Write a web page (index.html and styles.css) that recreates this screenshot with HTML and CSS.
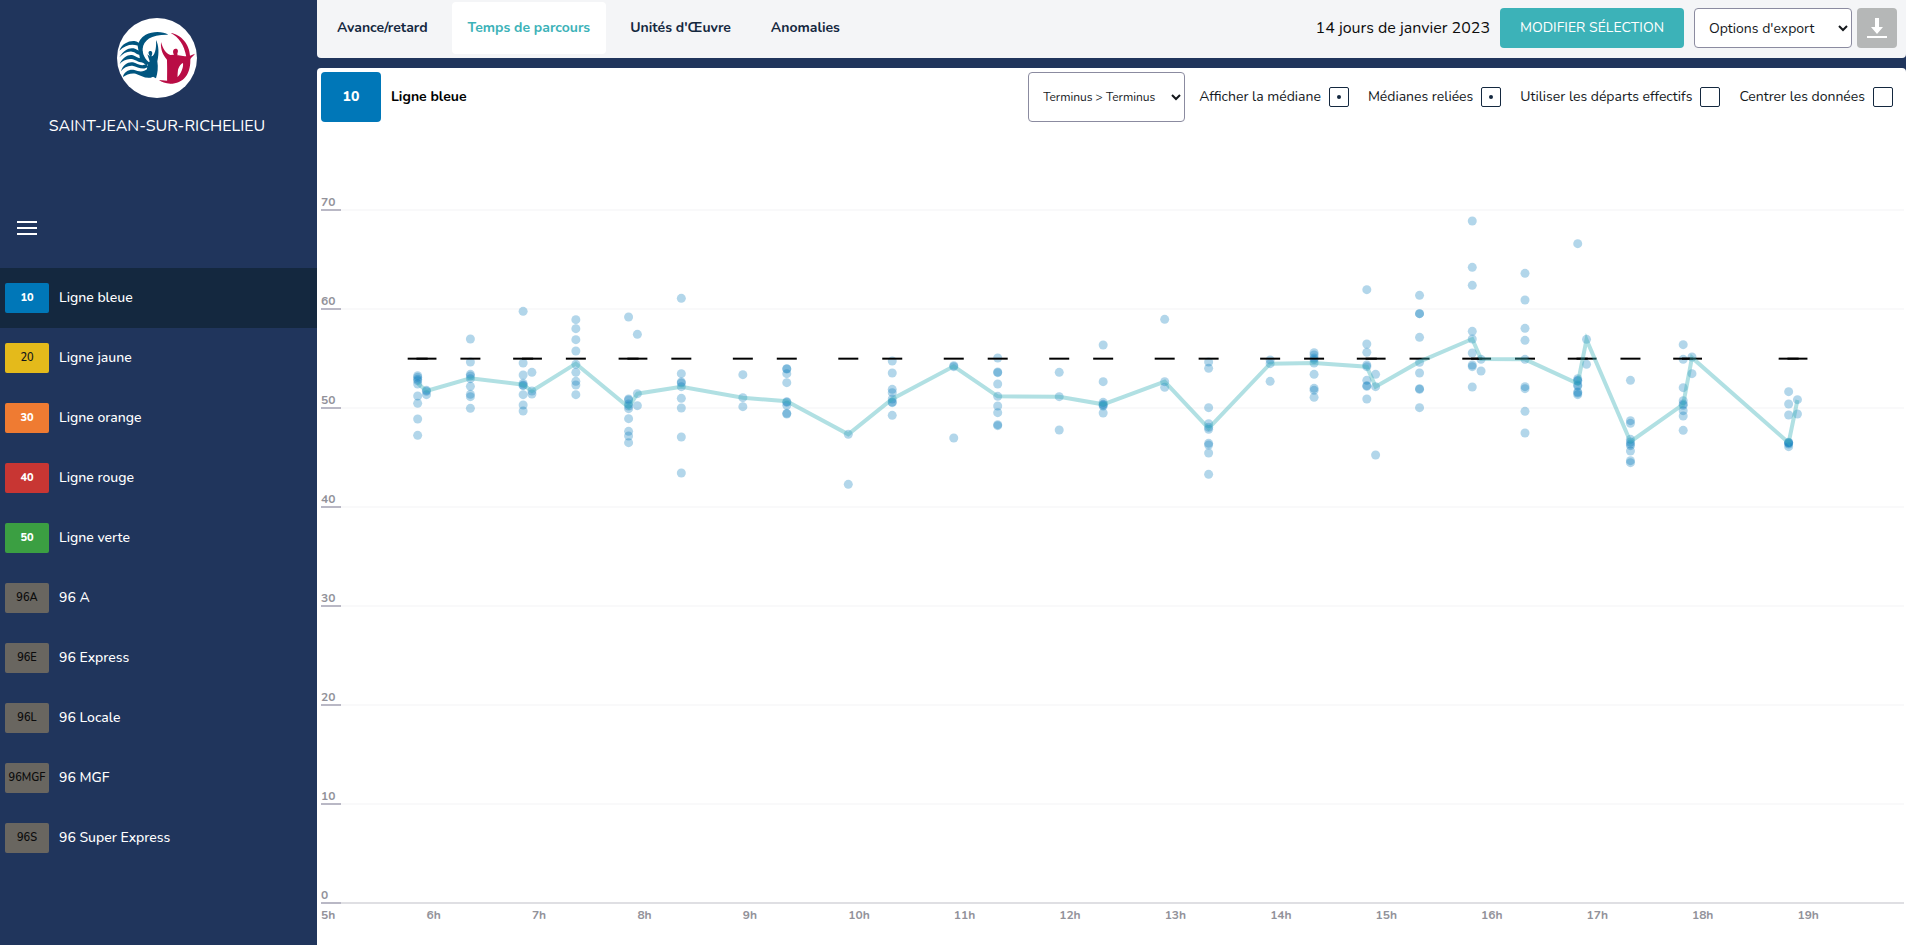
FILE: index.html
```html
<!DOCTYPE html>
<html lang="fr">
<head>
<meta charset="utf-8">
<title>Temps de parcours</title>
<link rel="stylesheet" href="styles.css">
</head>
<body>
<aside class="sidebar">
  <svg class="logo" viewBox="0 0 240 240" aria-label="Saint-Jean-sur-Richelieu">
    <circle cx="120" cy="120" r="120" fill="#fff"/>
    <g fill="#00557f">
      <path d="M154 50C138 40 108 39 86 50C72 58 64 70 62 84L70 128L88 142L100 136C84 124 76 108 77 92C80 66 102 49 154 50Z"/>
      <path d="M7 98C14 78 34 68 52 69C62 70 66 76 66 76L74 90C56 76 30 76 7 98Z"/>
      <path d="M7 118C20 96 36 88 50 91C60 93 66 102 76 99L78 109C62 114 56 102 45 101C32 99 18 106 7 118Z"/>
      <path d="M8 138C18 116 36 108 48 112C60 116 66 124 78 120L84 132C68 138 56 124 44 123C30 121 16 128 8 138Z"/>
      <path d="M12 160C18 138 36 130 48 133C60 136 70 146 88 139L94 146C78 158 62 146 46 143C32 142 20 149 12 160Z"/>
      <path d="M18 177C20 161 38 153 52 156C66 160 76 166 94 150L112 152L108 176C90 186 72 172 56 167C42 164 28 170 18 177Z"/>
      <path d="M117 66C125 82 127 104 121 130C124 148 122 166 117 181L108 176L94 178C88 166 88 142 98 130L91 109L100 116C94 108 92 100 99 99C106 98 108 106 103 115C112 116 119 94 117 66Z"/>
    </g>
    <g fill="#b90d45">
      <path d="M132 72C138 92 146 107 160 111L171 110C166 102 168 93 175 92C184 91 184 100 181 106L182 113L202 117C210 112 212 118 210 126C200 126 188 130 182 142L181 178C202 172 212 150 208 116C201 80 186 58 161 45C194 49 218 82 219 113L234 107C228 116 219 119 220 128C220 168 200 197 160 197C146 197 134 192 126 186L151 188C150 164 157 142 149 124C139 112 130 96 132 72Z"/>
      <path fill-rule="evenodd" d="M151 188L150 124L184 112L212 116L214 140L196 184L160 196ZM198 135C186 140 180 158 181 178C191 168 200 150 198 135Z"/>
    </g>
  </svg>
  <div class="network">SAINT-JEAN-SUR-RICHELIEU</div>
  <button class="burger" type="button" aria-label="Menu"><span></span><span></span><span></span></button>
  <nav class="lines">
    <a class="line active" href="#"><span class="badge blue">10</span>Ligne bleue</a>
    <a class="line" href="#"><span class="badge yellow">20</span>Ligne jaune</a>
    <a class="line" href="#"><span class="badge orange">30</span>Ligne orange</a>
    <a class="line" href="#"><span class="badge red">40</span>Ligne rouge</a>
    <a class="line" href="#"><span class="badge green">50</span>Ligne verte</a>
    <a class="line" href="#"><span class="badge grey">96A</span>96 A</a>
    <a class="line" href="#"><span class="badge grey">96E</span>96 Express</a>
    <a class="line" href="#"><span class="badge grey">96L</span>96 Locale</a>
    <a class="line" href="#"><span class="badge grey">96MGF</span>96 MGF</a>
    <a class="line" href="#"><span class="badge grey">96S</span>96 Super Express</a>
  </nav>
</aside>
<main class="content">
  <header class="topbar">
    <nav class="tabs">
      <a class="tab" href="#">Avance/retard</a>
      <a class="tab active" href="#">Temps de parcours</a>
      <a class="tab" href="#">Unités d'Œuvre</a>
      <a class="tab" href="#">Anomalies</a>
    </nav>
    <div class="actions">
      <span class="period">14 jours de janvier 2023</span>
      <button class="primary" type="button">MODIFIER SÉLECTION</button>
      <select class="export" aria-label="Options d'export"><option>Options d'export</option></select>
      <button class="download" type="button" aria-label="Télécharger">
        <svg viewBox="0 0 20 20" width="20" height="20" fill="#fff"><path d="M8 0h4v9h4l-6 7-6-7h4zM0 18h20v2H0z"/></svg>
      </button>
    </div>
  </header>
  <section class="panel">
    <div class="panel-head">
      <span class="line-badge">10</span>
      <h1>Ligne bleue</h1>
      <div class="options">
        <select class="route" aria-label="Parcours"><option>Terminus &gt; Terminus</option></select>
        <label>Afficher la médiane<input type="checkbox" checked></label>
        <label>Médianes reliées<input type="checkbox" checked></label>
        <label>Utiliser les départs effectifs<input type="checkbox"></label>
        <label>Centrer les données<input type="checkbox"></label>
      </div>
    </div>
    <svg class="chart" id="chart" viewBox="0 0 1589 823" preserveAspectRatio="xMinYMin meet"></svg>
  </section>
</main>
<script src="chart.js"></script>
</body>
</html>
```
FILE: styles.css
```css
* { box-sizing: border-box; }
body {
  margin: 0;
  min-height: 100vh;
  display: flex;
  background: #20355c;
  color: #14283f;
  font-family: Nunito, Lato, "Open Sans", sans-serif;
  font-size: 14px;
  line-height: 18px;
}
a { color: inherit; text-decoration: none; }
button, select, input { font: inherit; margin: 0; }
button { border: 0; cursor: pointer; }

.sidebar {
  flex: 0 0 317px;
  display: flex;
  flex-direction: column;
  padding-top: 18px;
  color: #fff;
}
.logo { width: 80px; height: 80px; align-self: center; margin-right: 3px; }
.network { margin: 16px 3px 0 0; line-height: 24px; font-size: 16px; text-align: center; }
.burger {
  display: flex;
  flex-direction: column;
  gap: 4px;
  width: 20px;
  margin: 83px 0 33px 17px;
  padding: 0;
  background: none;
}
.burger span { width: 20px; height: 2px; background: #fff; }
.line {
  display: flex;
  align-items: center;
  gap: 10px;
  height: 60px;
  padding-left: 5px;
  font-weight: 500;
}
.line.active { background: #14283f; }
.badge {
  width: 44px;
  height: 30px;
  border-radius: 2px;
  line-height: 29px;
  text-align: center;
  font-size: 11px;
  font-weight: 800;
}
.blue { background: #0077b8; }
.yellow { background: #e4ba1b; color: #14181c; font-weight: 600; }
.orange { background: #ef7b32; }
.red { background: #c83633; }
.green { background: #3b9f42; }
.grey { background: #696660; color: #0c0c0c; font-weight: 600; }

.content { flex: 1; min-width: 0; display: flex; flex-direction: column; gap: 10px; }
.topbar {
  display: flex;
  justify-content: space-between;
  height: 58px;
  padding: 2px 9px 4px 4px;
  border-radius: 0 0 4px 4px;
  background: #f4f5f7;
}
.tabs { display: flex; gap: 8px; font-weight: 700; }
.tab { padding: 0 16px; line-height: 52px; height: 52px; border-radius: 4px; }
.tab.active { background: #fff; color: #3cb2b8; }
.actions { display: flex; align-items: center; height: 40px; margin-top: 6px; }
.period { font-size: 16px; margin-right: 10px; color: #0c0c0c; }
.primary {
  width: 184px;
  height: 40px;
  border-radius: 4px;
  background: #3cb2b8;
  color: #fff;
  white-space: nowrap;
}
select { border: 1px solid #8b8ba0; border-radius: 4px; background-color: #fff; color: #14181c; }
.export { width: 158px; height: 40px; margin: 0 5px 0 10px; padding: 0 10px; }
.download {
  width: 40px;
  height: 40px;
  padding: 0;
  display: grid;
  place-items: center;
  border-radius: 4px;
  background: #b5b7b7;
}

.panel { flex: 1; border-radius: 4px 4px 0 0; background: #fff; }
.panel-head { display: flex; align-items: center; height: 54px; padding: 4px 13px 0 4px; }
.line-badge {
  width: 60px;
  height: 50px;
  border-radius: 4px;
  line-height: 50px;
  text-align: center;
  font-weight: 800;
  background: #0077b8;
  color: #fff;
}
h1 { margin: 0 0 0 10px; font-size: 14px; font-weight: 700; color: #000; }
.options { display: flex; align-items: center; gap: 19px; margin-left: auto; }
.route { width: 157px; height: 50px; margin-right: -5px; padding: 0 10px; font-size: 12px; }
.options label { display: flex; align-items: center; gap: 8px; color: #14181c; }
.options input {
  appearance: none;
  display: grid;
  place-items: center;
  width: 20px;
  height: 20px;
  border: 1px solid #14283f;
  border-radius: 2px;
  background: #fff;
}
.options input:checked::before {
  content: "";
  width: 4px;
  height: 4px;
  border-radius: 50%;
  background: #14283f;
}

.chart { display: block; width: 100%; }
.chart text { font-size: 12px; font-weight: 700; fill: #92929a; }
.grid { stroke: #f9f9fa; stroke-width: 2; }
.axis { stroke: #dfdfe3; stroke-width: 2; }
.tick { stroke: #b9b8c5; stroke-width: 2; }
.dot { fill: #0077b8; opacity: 0.3; }
.plan { stroke: #000; stroke-width: 2; }
.median { fill: none; stroke: #3cb2b8; stroke-width: 4; opacity: 0.4; }
```
FILE: chart.js
```js
// Each trip: [minutes after 5h, median position, run positions].
// Positions run downwards in thirds of a unit from the top of the plot.
const trips = [
  [55, 340, [317, 322, 328, 332, 342, 378, 400, 447, 496]],
  [60, 363, [361, 364, 374]],
  [85, 325, [207, 276, 313, 318, 326, 349, 373, 380, 415]],
  [115, 344, [124, 279, 315, 340, 345, 347, 374, 405, 423]],
  [120, 363, [307, 363, 372]],
  [145, 281, [149, 176, 209, 243, 283, 307, 334, 345, 374]],
  [175, 412, [141, 387, 390, 402, 408, 416, 446, 484, 498, 518]],
  [180, 371, [193, 371, 407]],
  [205, 350, [85, 311, 336, 339, 350, 385, 414, 501, 609]],
  [240, 383, [314, 383, 410]],
  [265, 394, [296, 297, 311, 338, 395, 397, 406, 430, 432]],
  [300, 493, [493, 643]],
  [325, 387, [273, 309, 358, 368, 387, 396, 398, 436]],
  [360, 289, [287, 290, 504]],
  [385, 379, [264, 306, 308, 342, 379, 408, 428, 464, 467]],
  [420, 380, [307, 380, 480]],
  [445, 403, [225, 335, 397, 403, 405, 408, 429]],
  [480, 335, [148, 335, 352]],
  [505, 475, [276, 295, 413, 461, 472, 478, 520, 525, 549, 613]],
  [540, 281, [270, 281, 334]],
  [565, 279, [248, 255, 264, 269, 279, 313, 355, 361, 382]],
  [595, 290, [59, 222, 247, 285, 290, 331, 347, 349, 387]],
  [600, 350, [313, 350, 555]],
  [625, 275, [76, 131, 131, 202, 277, 309, 356, 358, 413]],
  [655, 207, [-147, -8, 46, 184, 207, 249, 285, 290, 351]],
  [660, 267, [268, 303]],
  [685, 268, [10, 90, 175, 211, 268, 350, 356, 424, 489]],
  [715, 341, [-79, 326, 331, 333, 345, 348, 366, 369, 374]],
  [720, 209, [208, 283]],
  [745, 515, [331, 452, 460, 508, 516, 522, 527, 543, 572, 578]],
  [775, 403, [224, 268, 353, 392, 402, 406, 422, 438, 481]],
  [780, 263, [261, 311]],
  [835, 518, [365, 402, 435, 517, 518, 519, 522, 530]],
  [840, 390, [389, 432]]
];
const svg = document.getElementById("chart");
const LEFT = 4, BASE = 781, STEP = 99, HOUR = 105.46, TOP = 148;
const toX = minutes => LEFT + minutes * HOUR / 60;
const toY = position => TOP + position / 3;

function add(name, attrs, text) {
  const node = document.createElementNS("http://www.w3.org/2000/svg", name);
  for (const key in attrs) node.setAttribute(key, attrs[key]);
  if (text !== undefined) node.textContent = text;
  svg.appendChild(node);
}
function rule(cls, x1, x2, y) {
  add("line", { class: cls, x1, x2, y1: y, y2: y });
}

for (let i = 0; i < 8; i++) {
  const y = BASE - i * STEP;
  rule(i ? "grid" : "axis", LEFT, 1587, y);
  rule("tick", LEFT, LEFT + 20, y);
  add("text", { x: LEFT, y: y - 4 }, i * 10);
}
for (let h = 5; h < 20; h++) {
  add("text", { x: LEFT + (h - 5) * HOUR, y: BASE + 16 }, h + "h");
}
for (const [minutes, , runs] of trips) {
  for (const run of runs) add("circle", { class: "dot", cx: toX(minutes), cy: toY(run), r: 4.5 });
}
for (const [minutes] of trips) rule("plan", toX(minutes) - 10, toX(minutes) + 10, toY(266));
add("polyline", { class: "median", points: trips.map(t => toX(t[0]) + "," + toY(t[1])).join(" ") });
```
